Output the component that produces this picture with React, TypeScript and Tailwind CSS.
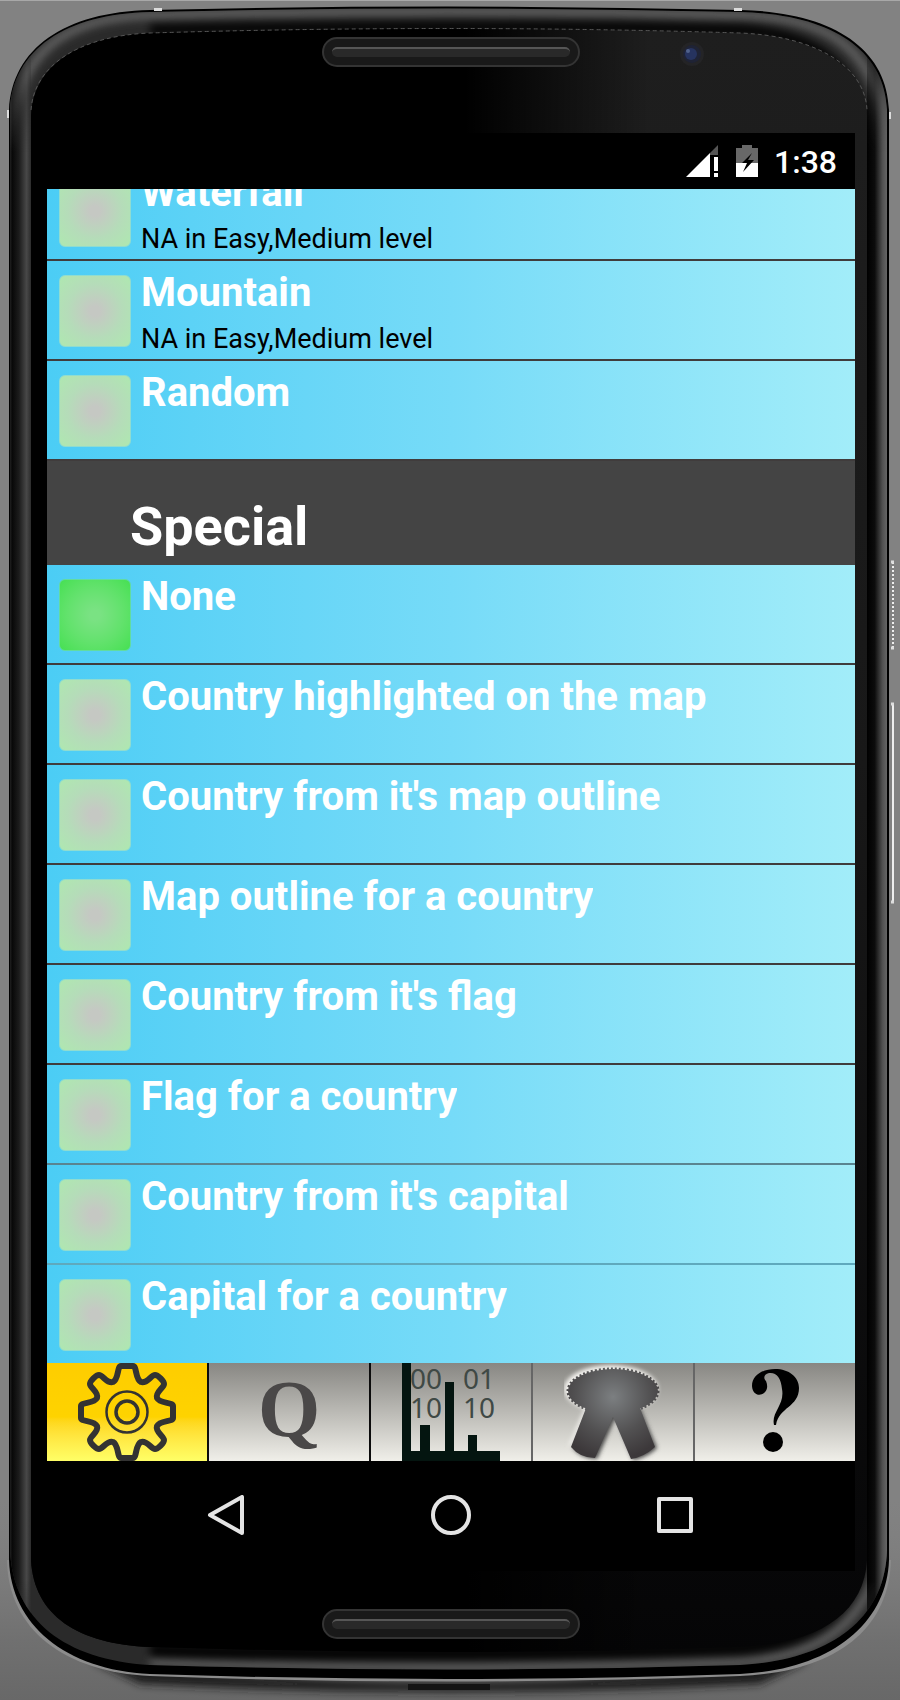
import { useState } from "react";

type Option = { name: string; note?: string; divider?: string };

const MAIN: Option[] = [
  { name: "Waterfall", note: "NA in Easy,Medium level" },
  { name: "Mountain", note: "NA in Easy,Medium level" },
  { name: "Random" },
];

const SPECIAL: Option[] = [
  { name: "None" },
  { name: "Country highlighted on the map" },
  { name: "Country from it's map outline" },
  { name: "Map outline for a country" },
  { name: "Country from it's flag" },
  { name: "Flag for a country", divider: "border-b-2 border-[#5a8490]" },
  { name: "Country from it's capital", divider: "border-b-2 border-[#5fa9bd]" },
  { name: "Capital for a country", divider: "border-b-0" },
];

function Row({ option, group, checked, onSelect }: {
  option: Option;
  group: string;
  checked: boolean;
  onSelect: () => void;
}) {
  return (
    <label
      className={`flex shrink-0 cursor-pointer items-start gap-2.5 bg-linear-to-r from-[#4bcdf5] via-[#76dbf8] to-[#a2edf9] pl-3 ${option.divider ?? "border-b-2 border-[#403c3c]"}`}
    >
      <input
        type="radio"
        name={group}
        checked={checked}
        onChange={onSelect}
        className="mt-3.5 mb-3 size-18 shrink-0 appearance-none rounded-md border border-[#8fdcd0] bg-radial from-[#c5c8c3] from-10% via-[#b5dcb9] via-55% to-[#aee8b0] checked:border-[#62dca0] checked:from-[#7ae283] checked:via-[#63e26d] checked:to-[#45e052]"
      />
      <span className="flex min-w-0 flex-col pt-[9px]">
        <span className="truncate text-[40px] leading-[46px] font-bold text-white">{option.name}</span>
        {option.note && <span className="mt-1.5 truncate text-[27px] leading-[34px] text-black">{option.note}</span>}
      </span>
    </label>
  );
}

function Frame() {
  return (
    <svg className="absolute inset-0 size-full" viewBox="0 0 900 1700" preserveAspectRatio="none" aria-hidden="true">
      <defs>
        <linearGradient id="floor" x1="0" y1="0" x2="0" y2="1">
          <stop offset="0" stopColor="#7d7d7d" stopOpacity="0" />
          <stop offset="0.7" stopColor="#707070" />
          <stop offset="1" stopColor="#686868" />
        </linearGradient>
        <linearGradient id="glass" x1="0" y1="0" x2="0" y2="1">
          <stop offset="0" stopColor="#1e1e1e" />
          <stop offset="0.45" stopColor="#181818" />
          <stop offset="1" stopColor="#050506" />
        </linearGradient>
        <linearGradient id="fade" x1="0" y1="0" x2="1" y2="0">
          <stop offset="0" stopColor="#000" />
          <stop offset="0.52" stopColor="#000" />
          <stop offset="0.74" stopColor="#000" stopOpacity="0" />
        </linearGradient>
        <linearGradient id="left" x1="0" y1="0" x2="1" y2="0">
          <stop offset="0" stopColor="#2b2b2b" />
          <stop offset="0.15" stopColor="#080808" />
          <stop offset="0.45" stopColor="#1c1c1c" />
          <stop offset="0.8" stopColor="#484848" />
          <stop offset="1" stopColor="#2c2c2c" />
        </linearGradient>
        <linearGradient id="right" x1="0" y1="0" x2="1" y2="0">
          <stop offset="0" stopColor="#000" />
          <stop offset="0.35" stopColor="#0c0c0c" />
          <stop offset="0.7" stopColor="#505050" />
          <stop offset="0.9" stopColor="#656565" />
          <stop offset="1" stopColor="#222" />
        </linearGradient>
        <linearGradient id="sides" x1="0" y1="0" x2="0" y2="1">
          <stop offset="0.02" stopColor="#fff" stopOpacity="0" />
          <stop offset="0.09" stopColor="#fff" />
          <stop offset="0.93" stopColor="#fff" />
          <stop offset="0.98" stopColor="#fff" stopOpacity="0" />
        </linearGradient>
        <mask id="side-mask" maskUnits="userSpaceOnUse" x="0" y="0" width="900" height="1700">
          <rect width="900" height="1700" fill="url(#sides)" />
        </mask>
        <filter id="soft" filterUnits="userSpaceOnUse" x="0" y="0" width="900" height="1700">
          <feGaussianBlur stdDeviation="4" />
        </filter>
        <clipPath id="body">
          <path d="M10 110C13 49 66 14 150 12Q450 5 740 12C830 14 885 49 887 110L887 1550C885 1620 830 1660 740 1665Q450 1674 150 1665C65 1660 13 1620 10 1550Z" />
        </clipPath>
      </defs>
      <rect y="1500" width="900" height="200" fill="url(#floor)" />
      <rect width="900" height="1" fill="#a8a8a8" />
      <path d="M90 1660Q450 1704 810 1660L760 1684Q450 1700 140 1684Z" fill="#1c1c1c" filter="url(#soft)" />
      <path d="M7 1560C8 1630 65 1672 150 1676Q450 1687 740 1676C835 1672 889 1630 891 1560Z" fill="#8c8c8c" />
      <path d="M9 110C12 48 65 12 150 10Q450 3 740 10C832 12 887 48 889 110L889 1560C887 1624 830 1670 740 1674Q450 1684 150 1674C65 1670 11 1624 9 1560Z" fill="#000" />
      <g clipPath="url(#body)">
        <rect x="9" y="6" width="880" height="1668" fill="#2a2a2a" />
        <path d="M11 150C12 50 66 17 150 15Q450 8 740 15C830 17 883 49 886 150" fill="none" stroke="#666" strokeWidth="8" filter="url(#soft)" />
        <path d="M867 160C865 65 818 35 740 30Q450 23 150 30" fill="none" stroke="#000" strokeWidth="10" filter="url(#soft)" />
        <path d="M886 1500C886 1615 830 1656 740 1662Q450 1672 150 1662" fill="none" stroke="#707070" strokeWidth="6" filter="url(#soft)" />
        <path d="M867 1500C866 1612 815 1642 740 1648Q450 1658 150 1650" fill="none" stroke="#000" strokeWidth="12" filter="url(#soft)" />
        <g mask="url(#side-mask)">
          <rect x="9" y="0" width="22" height="1700" fill="url(#left)" />
          <rect x="867" y="0" width="22" height="1700" fill="url(#right)" />
        </g>
      </g>
      <path d="M31 115C33 66 78 36 150 33Q450 24 740 33C815 36 865 66 867 115L867 1560C864 1616 815 1644 740 1647Q450 1657 150 1647C78 1644 34 1616 31 1560Z" fill="url(#glass)" />
      <path d="M31 115C33 66 78 36 150 33Q450 24 740 33C815 36 865 66 867 115L867 1560C864 1616 815 1644 740 1647Q450 1657 150 1647C78 1644 34 1616 31 1560Z" fill="url(#fade)" />
      <path d="M31 110C34 66 78 36 150 33Q450 24 740 33C815 36 865 66 867 110" fill="none" stroke="#555" strokeWidth="1" strokeDasharray="4 3" />
      <path d="M154 8h8v3h-8zM734 8h8v3h-8zM7 110h2v8h-2zM889 112h2v7h-2z" fill="#ddd" />
      <path d="M408 1690V1684H490V1690" fill="#141414" />
      <path d="M893 562v86" stroke="#eee" strokeWidth="2" strokeDasharray="2 2" />
      <path d="M893 704v198" stroke="#eee" strokeWidth="2" />
      <path d="M891 562h3M891 648h3M891 704h3M891 902h3" stroke="#ddd" strokeWidth="3" />
      <circle cx="692" cy="54" r="12" fill="#242426" />
      <circle cx="692" cy="54" r="9" fill="#1f2335" />
      <circle cx="691" cy="54" r="6" fill="#26335f" />
      <circle cx="688" cy="51" r="2" fill="#50618c" />
    </svg>
  );
}

function Speaker() {
  return (
    <div className="mx-auto h-[30px] w-[258px] rounded-full border-2 border-[#343434] bg-[#191919] p-2">
      <div className="h-2.5 rounded-full border-t-2 border-[#565656] bg-[#292929]" />
    </div>
  );
}

const TAB = "flex h-[98px] min-w-0 flex-1 cursor-pointer items-center justify-center overflow-hidden bg-linear-to-b from-[#888783] to-[#f0efe9]";

export default function App() {
  const [main, setMain] = useState("");
  const [special, setSpecial] = useState("None");

  return (
    <div className="relative min-h-screen w-full overflow-hidden bg-[#828282] font-[Roboto,sans-serif]">
      <Frame />
      <div className="relative flex flex-col pr-[45px] pl-[47px]">
        <div className="h-[133px] pt-[37px]"><Speaker /></div>

        <header className="flex h-14 items-center justify-end bg-black pr-[18px] text-white">
          <svg className="mr-[18px] h-8 w-8" viewBox="0 0 32 32" role="img" aria-label="Mobile signal">
            <path d="M0 32L24 8V32Z" fill="#fff" />
            <path d="M24 8L32 0V10H24Z" fill="#555" />
            <path d="M28 12h4v14h-4zM28 28h4v4h-4z" fill="#fff" />
          </svg>
          <svg className="mr-4 h-8 w-[22px]" viewBox="0 0 22 32" role="img" aria-label="Battery charging">
            <path d="M6 0H16V3H22V18H0V3H6Z" fill="#686868" />
            <path d="M0 18H22V32H0Z" fill="#fff" />
            <path d="M16 8L6 18H11L7 27L18 15H12Z" fill="#000" />
          </svg>
          <span className="pt-0.5 text-[32px] leading-9 font-medium">1:38</span>
        </header>

        <main className="flex h-[1174px] flex-col justify-end overflow-hidden">
          {MAIN.map((o) => (
            <Row key={o.name} option={o} group="main" checked={main === o.name} onSelect={() => setMain(o.name)} />
          ))}
          <h2 className="h-[104px] shrink-0 bg-[#444] pt-9 pl-[83px] text-[54px] leading-[60px] font-bold text-white">Special</h2>
          {SPECIAL.map((o) => (
            <Row key={o.name} option={o} group="special" checked={special === o.name} onSelect={() => setSpecial(o.name)} />
          ))}
        </main>

        <nav aria-label="Sections" className="flex gap-0.5 bg-linear-to-r from-[#0c0c0c] from-50% to-[#666] to-60%">
          <button aria-label="Settings" className="flex h-[98px] min-w-0 flex-1 cursor-pointer items-center justify-center overflow-hidden bg-linear-to-b from-[#fecd00] via-[#fed300] via-55% to-[#ffff66]">
            <svg className="h-[98px] w-[100px]" viewBox="-50 -49 100 98" fill="none" stroke="#333" strokeLinejoin="round">
              <path
                strokeWidth="6"
                d="M-6-46H6C10-46 8-33 14-30C20-28 24-37 28-37C31-37 37-31 37-28C37-24 28-20 30-14C33-8 46-10 46-6V6C46 10 33 8 30 14C28 20 37 24 37 28C37 31 31 37 28 37C24 37 20 28 14 30C8 33 10 46 6 46H-6C-10 46-8 33-14 30C-20 28-24 37-28 37C-31 37-37 31-37 28C-37 24-28 20-30 14C-33 8-46 10-46 6V-6C-46-10-33-8-30-14C-28-20-37-24-37-28C-37-31-31-37-28-37C-24-37-20-28-14-30C-8-33-10-46-6-46Z"
              />
              <circle r="20.5" strokeWidth="2.5" />
              <circle r="11" strokeWidth="3.5" />
            </svg>
          </button>
          <button aria-label="Quiz" className={TAB}>
            <span className="pb-1.5 font-['Liberation_Serif',serif] text-[80px] leading-none font-bold text-[#4a4848]">Q</span>
          </button>
          <button aria-label="Statistics" className={TAB}>
            <svg className="h-[98px] w-[98px]" viewBox="0 0 98 98">
              <g fill="#3f4945" fontFamily="Noto Sans" fontSize="28">
                <text x="8" y="26">00</text><text x="61" y="26">01</text>
                <text x="8" y="55">10</text><text x="61" y="55">10</text>
              </g>
              <path d="M0 0H9V88H18V62H28V88H43V19H52V88H66V72H75V88H98V98H0Z" fill="#041510" />
            </svg>
          </button>
          <button aria-label="Awards" className={TAB}>
            <svg className="h-[98px] w-[98px]" viewBox="0 0 98 98">
              <defs>
                <radialGradient id="ribbon" gradientUnits="userSpaceOnUse" cx="49" cy="34" r="62">
                  <stop offset="0" stopColor="#7c7f81" />
                  <stop offset="0.6" stopColor="#525152" />
                  <stop offset="1" stopColor="#3c383a" />
                </radialGradient>
                <filter id="glow" x="-20%" y="-20%" width="140%" height="140%"><feGaussianBlur stdDeviation="2" /></filter>
              </defs>
              <g transform="translate(-2 -2)" fill="#f4f3ef" filter="url(#glow)">
                <ellipse cx="49" cy="28" rx="47" ry="24" />
                <path d="M24 44L7 84L29 95L49 54L69 95L90 84L72 44Z" />
              </g>
              <path d="M24 44L7 84Q16 95 31 95L49 54L67 96Q80 94 91 84L74 44Z" transform="translate(2 1)" fill="#444" filter="url(#glow)" />
              <g fill="url(#ribbon)">
                <path d="M24 40L7 84Q16 95 31 95L49 54L67 96Q80 94 91 84L74 40Z" />
                <ellipse cx="49" cy="28" rx="45" ry="22" />
              </g>
              <ellipse cx="49" cy="28" rx="45" ry="22" fill="none" stroke="url(#ribbon)" strokeWidth="3" strokeDasharray="2 2" />
            </svg>
          </button>
          <button aria-label="Help" className={TAB}>
            <svg className="h-[98px] w-[98px]" viewBox="0 0 98 98" aria-hidden="true">
              <path d="M48 62C45 49 59 42 56 26C55 14 50 9 43 10C38 11 37 15 40 18C46 32 27 38 26 23C26 12 37 6 49 6C63 6 73 14 73 25C73 44 53 44 50 62Z" />
              <circle cx="47" cy="79" r="10" />
            </svg>
          </button>
        </nav>

        <nav aria-label="System" className="flex h-[110px] items-center justify-center gap-[184px] bg-black pb-0.5">
          <button aria-label="Back" className="cursor-pointer">
            <svg className="size-10" viewBox="0 0 40 40" fill="none" stroke="#e4e4e4" strokeWidth="4" strokeLinejoin="round"><path d="M3 20L35 2V38Z" /></svg>
          </button>
          <button aria-label="Home" className="cursor-pointer">
            <svg className="size-10" viewBox="0 0 40 40" fill="none" stroke="#e4e4e4" strokeWidth="4"><circle cx="20" cy="20" r="18" /></svg>
          </button>
          <button aria-label="Recent apps" className="cursor-pointer">
            <svg className="size-10" viewBox="0 0 40 40" fill="none" stroke="#e4e4e4" strokeWidth="4" strokeLinejoin="round"><rect x="4" y="4" width="32" height="32" /></svg>
          </button>
        </nav>
        <div className="pt-[38px]"><Speaker /></div>
      </div>
    </div>
  );
}
